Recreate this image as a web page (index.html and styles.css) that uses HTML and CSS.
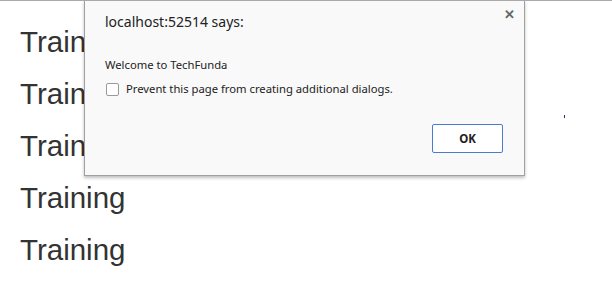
FILE: index.html
```html
<!DOCTYPE html>
<html lang="en">
<head>
  <meta charset="UTF-8" />
  <title>TechFunda</title>
  <link rel="stylesheet" href="styles.css">
</head>
<body>
  <div class="page">
    <p class="linea">Training</p>
    <p class="linea">Training</p>
    <p class="linea">Training</p>
    <p class="linea">Training</p>
    <p class="linea">Training</p>
  </div>
  <span class="punto"></span>

  <div class="alerta">
    <button class="cerrar" type="button">&#x2715;</button>
    <div class="titulo">localhost:52514 says:</div>
    <div class="mensaje">Welcome to TechFunda</div>
    <label class="opcion">
      <span class="check"></span>
      Prevent this page from creating additional dialogs.
    </label>
    <div class="acciones">
      <button class="ok" type="button">OK</button>
    </div>
  </div>
</body>
</html>
```

FILE: styles.css
```css
html, body {
  margin: 0;
  background: #fff;
}
body {
  border-top: 1px solid #a9a9a9;
  font-family: 'Liberation Sans', Arial, sans-serif;
  color: #333;
  height: 288px;
  overflow: hidden;
  position: relative;
}
.page {
  padding: 15px 20px 0;
}
.linea {
  margin: 0;
  font-size: 29.5px;
  line-height: 52px;
}
.punto {
  position: absolute;
  left: 564px;
  top: 114px;
  width: 1px;
  height: 3px;
  background: #2a2a80;
}
.alerta {
  position: absolute;
  left: 84px;
  top: -1px;
  width: 441px;
  height: 176px;
  box-sizing: border-box;
  background: #f9f9f9;
  border: 1px solid #a0a0a0;
  border-top: none;
  box-shadow: 0 2px 3px rgba(0,0,0,0.25);
  font-family: 'Noto Sans', 'Open Sans', sans-serif;
  color: #222;
  padding: 12px 20px 0 20px;
}
.cerrar {
  position: absolute;
  right: 9px;
  top: 7px;
  border: none;
  background: none;
  color: #666;
  font-size: 13px;
  font-weight: bold;
  padding: 0;
  cursor: pointer;
}
.titulo {
  font-size: 14px;
  line-height: 20px;
}
.mensaje {
  margin-top: 25px;
  font-size: 11.25px;
  line-height: 16px;
}
.opcion {
  display: flex;
  align-items: center;
  gap: 7px;
  margin-top: 7px;
  font-size: 11.25px;
  line-height: 18px;
}
.check {
  width: 11px;
  height: 11px;
  border: 1px solid #9a9a9a;
  border-radius: 2px;
  background: #fff;
  margin-left: 1px;
}
.acciones {
  display: flex;
  justify-content: flex-end;
  margin-top: 26px;
  padding-right: 1px;
}
.ok {
  width: 71px;
  height: 29px;
  background: #fff;
  border: 1px solid #4a7bd0;
  border-radius: 2px;
  font-family: 'Noto Sans', 'Open Sans', sans-serif;
  font-weight: bold;
  font-size: 11.5px;
  color: #222;
}
```
